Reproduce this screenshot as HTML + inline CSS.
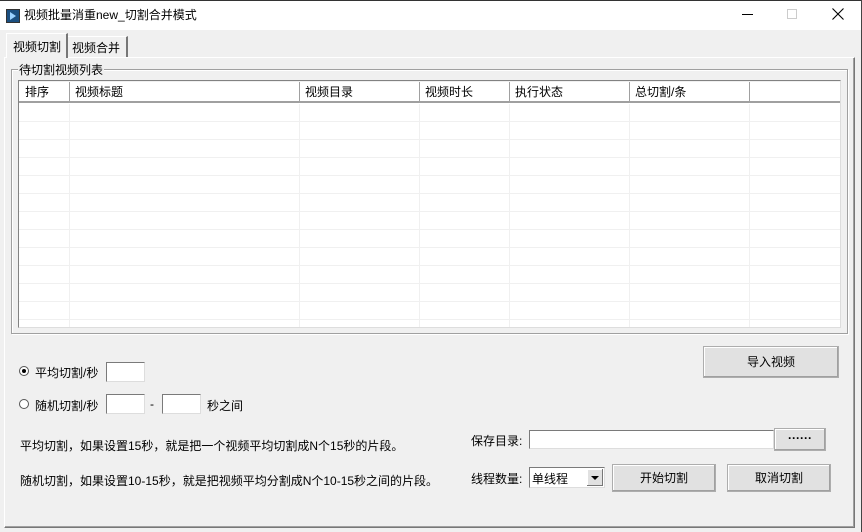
<!DOCTYPE html>
<html><head><meta charset="utf-8"><style>
*{box-sizing:border-box;margin:0;padding:0}
body{width:862px;height:532px;background:#f0f0f0;font-family:"Liberation Sans","Noto Sans CJK SC",sans-serif;font-size:12px;color:#000;position:relative;overflow:hidden}
.a{position:absolute}
.title{left:0;top:0;width:862px;height:30px;background:#fff;border-top:1px solid #333;border-right:1px solid #333}
.btn{position:absolute;background:#e1e1e1;border:1px solid #adadad;box-shadow:inset -1px -1px 0 #a0a0a0,inset 1px 1px 0 #fff;text-align:center;font-size:12px}
.edit{position:absolute;background:#fff;border:1px solid #7a7a7a;border-right-color:#ddd;border-bottom-color:#ddd}
.col{position:absolute;top:0;height:246px;border-left:1px solid #f0f0f0}
.hs{position:absolute;top:1px;height:19px;border-left:1px solid #a0a0a0}
.ht{position:absolute;top:2px;font-size:12px}
</style></head><body>
<div class="a title">
 <div class="a" style="left:6px;top:8px;width:14px;height:14px;background:#1b4f80;border:1px solid #333"><div class="a" style="left:3px;top:2px;width:0;height:0;border-left:6px solid #9cd2ff;border-top:4px solid transparent;border-bottom:4px solid transparent"></div></div>
 <div class="a" style="left:24px;top:5px;font-size:12px">视频批量消重new_切割合并模式</div>
 <div class="a" style="left:742px;top:13px;width:11px;height:1px;background:#000"></div>
 <div class="a" style="left:787px;top:8px;width:10px;height:10px;border:1px solid #ccc"></div>
 <svg class="a" style="left:832px;top:7px" width="12" height="12"><path d="M0.5 0.5L11.5 11.5M11.5 0.5L0.5 11.5" stroke="#000" stroke-width="1.1"/></svg>
</div>
<div class="a" style="left:861px;top:0;width:1px;height:532px;background:#444"></div>
<div class="a" style="left:4px;top:57px;width:851px;height:471px;border:1px solid #fff;border-right-color:#777;border-bottom-color:#777;box-shadow:inset -1px -1px 0 #a0a0a0"></div>
<div class="a" style="left:6px;top:33px;width:62px;height:25px;background:#f0f0f0;border:1px solid #fff;border-bottom:none;border-right:2px solid #777"><span class="a" style="left:6px;top:4px">视频切割</span></div>
<div class="a" style="left:68px;top:36px;width:60px;height:21px;border:1px solid #fff;border-bottom:none;border-right:2px solid #777;border-left:none"><span class="a" style="left:4px;top:2px">视频合并</span></div>
<div class="a" style="left:11px;top:69px;width:837px;height:265px;border:1px solid #a0a0a0;box-shadow:1px 1px 0 #fff,inset 1px 1px 0 #fff"></div>
<div class="a" style="left:18px;top:61px;background:#f0f0f0;padding:0 1px">待切割视频列表</div>
<div class="a" style="left:18px;top:80px;width:823px;height:248px;background:#fff;border:1px solid #828282;border-right-color:#ddd;border-bottom-color:#ddd;overflow:hidden">
 <div class="a" style="left:0;top:0;width:823px;height:22px;border-top:1px solid #f0f0f0;border-bottom:2px solid #a0a0a0;background:#fff"></div>
 <div class="a" style="left:0;top:23px;width:823px;height:225px;background:repeating-linear-gradient(#fff 0 17px,#f0f0f0 17px 18px)"></div>
 <div class="hs" style="left:50px"></div><div class="hs" style="left:280px"></div><div class="hs" style="left:400px"></div><div class="hs" style="left:490px"></div><div class="hs" style="left:610px"></div><div class="hs" style="left:730px"></div>
 <div class="col" style="left:50px;top:23px"></div><div class="col" style="left:280px;top:23px"></div><div class="col" style="left:400px;top:23px"></div><div class="col" style="left:490px;top:23px"></div><div class="col" style="left:610px;top:23px"></div><div class="col" style="left:730px;top:23px"></div>
 <span class="ht" style="left:6px">排序</span><span class="ht" style="left:56px">视频标题</span><span class="ht" style="left:286px">视频目录</span><span class="ht" style="left:406px">视频时长</span><span class="ht" style="left:496px">执行状态</span><span class="ht" style="left:616px">总切割/条</span>
</div>
<div class="a" style="left:19px;top:366px;width:10px;height:10px;border-radius:50%;border:1px solid #555;background:#fff"><div class="a" style="left:2px;top:2px;width:4px;height:4px;border-radius:50%;background:#000"></div></div>
<div class="a" style="left:35px;top:364px">平均切割/秒</div>
<div class="edit" style="left:106px;top:362px;width:39px;height:20px"></div>
<div class="a" style="left:19px;top:399px;width:10px;height:10px;border-radius:50%;border:1px solid #555;background:#fff"></div>
<div class="a" style="left:35px;top:397px">随机切割/秒</div>
<div class="edit" style="left:106px;top:394px;width:39px;height:20px"></div>
<div class="a" style="left:150px;top:397px">-</div>
<div class="edit" style="left:162px;top:394px;width:39px;height:20px"></div>
<div class="a" style="left:207px;top:397px">秒之间</div>
<div class="a" style="left:20px;top:437px">平均切割，如果设置15秒，就是把一个视频平均切割成N个15秒的片段。</div>
<div class="a" style="left:20px;top:472px">随机切割，如果设置10-15秒，就是把视频平均分割成N个10-15秒之间的片段。</div>
<div class="btn" style="left:703px;top:346px;width:136px;height:32px;line-height:30px">导入视频</div>
<div class="a" style="left:471px;top:432px">保存目录:</div>
<div class="edit" style="left:529px;top:430px;width:245px;height:19px"></div>
<div class="btn" style="left:774px;top:428px;width:52px;height:23px;line-height:18px;font-weight:bold">······</div>
<div class="a" style="left:471px;top:470px">线程数量:</div>
<div class="a" style="left:529px;top:467px;width:76px;height:21px;background:#fff;border:1px solid #7a7a7a;border-right-color:#ddd;border-bottom-color:#ddd"><span class="a" style="left:2px;top:2px">单线程</span>
 <div class="a" style="left:57px;top:1px;width:16px;height:17px;background:#e1e1e1;box-shadow:inset -1px -1px 0 #777,inset 1px 1px 0 #fff"><div class="a" style="left:4px;top:7px;border-top:4px solid #000;border-left:4px solid transparent;border-right:4px solid transparent"></div></div></div>
<div class="btn" style="left:612px;top:464px;width:104px;height:28px;line-height:26px">开始切割</div>
<div class="btn" style="left:727px;top:464px;width:104px;height:28px;line-height:26px">取消切割</div>
</body></html>
